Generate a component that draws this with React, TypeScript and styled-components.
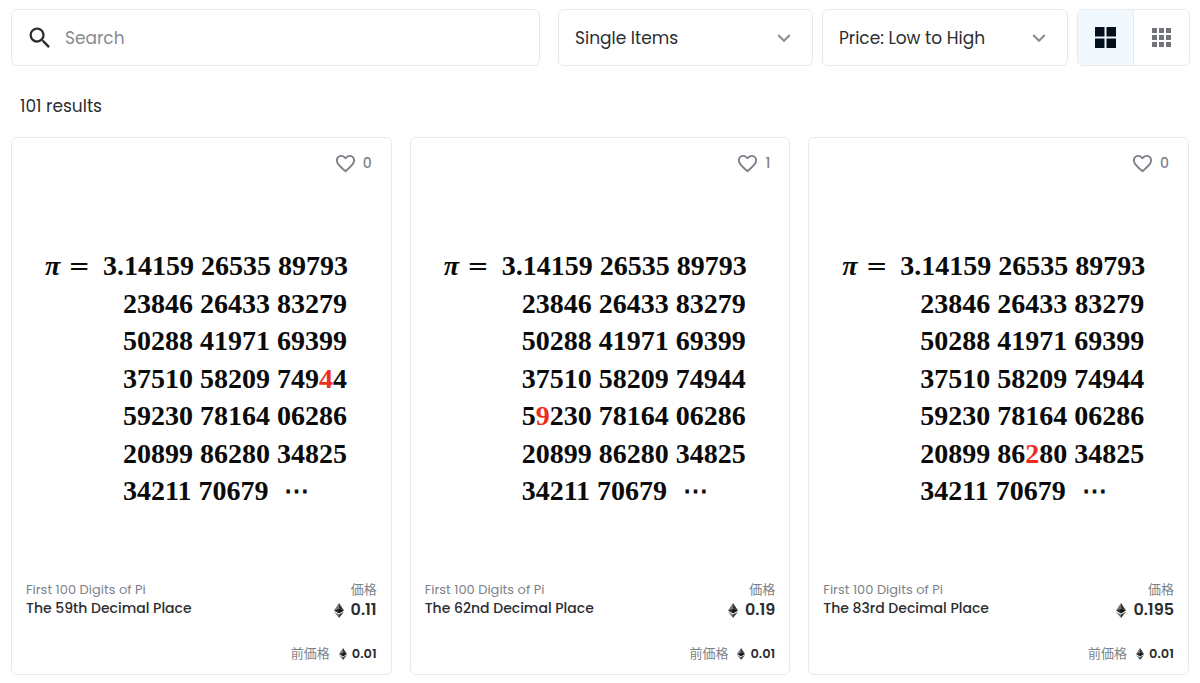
import React from "react";
import styled, { createGlobalStyle } from "styled-components";
import { MdSearch, MdKeyboardArrowDown, MdFavoriteBorder } from "react-icons/md";

const GlobalStyle = createGlobalStyle`
  *, *::before, *::after { box-sizing: border-box; }
  body, button, input, select {
    font-family: Poppins, Inter, "Noto Sans CJK JP", sans-serif;
  }
  body {
    margin: 0;
    background: #fff;
    color: #2b2d31;
  }
  button, input, select { color: inherit; }
`;

const line = "#e8e9eb";
const muted = "#7d828a";

const Page = styled.main`
  padding: 9px 10px 9px 11px;
`;

const Toolbar = styled.form`
  display: flex;
  gap: 9px;
  height: 57px;
`;

const SearchBox = styled.label`
  display: flex;
  flex: 1;
  align-items: center;
  gap: 11px;
  min-width: 0;
  margin-right: 9px;
  padding: 0 14px;
  border: 1px solid ${line};
  border-radius: 6px;
`;

const SearchInput = styled.input`
  flex: 1;
  min-width: 0;
  padding: 0;
  border: 0;
  outline: 0;
  background: transparent;
  font-size: 17px;
  &::placeholder { color: #878b91; opacity: 1; }
`;

const SelectBox = styled.div<{ $width: number }>`
  display: grid;
  align-items: center;
  width: ${(p) => p.$width}px;
  border: 1px solid ${line};
  border-radius: 6px;

  & > * { grid-area: 1 / 1; }
  & > svg {
    justify-self: end;
    margin-right: 15px;
    color: #8a8d92;
    pointer-events: none;
  }
`;

const Select = styled.select`
  width: 100%;
  height: 100%;
  padding: 0 44px 0 16px;
  border: 0;
  border-radius: 6px;
  appearance: none;
  background: transparent;
  font-size: 17px;
`;

const Toggle = styled.div`
  display: flex;
  width: 113px;
  overflow: hidden;
  border: 1px solid ${line};
  border-radius: 6px;
`;

const ToggleButton = styled.button<{ $active?: boolean }>`
  display: grid;
  flex: 1;
  place-items: center;
  padding: 0;
  border: 0;
  background: ${(p) => (p.$active ? "#f2f9fe" : "#fff")};
  color: ${(p) => (p.$active ? "#04111d" : "#707478")};
  & + & { border-left: 1px solid ${line}; }
`;

const Results = styled.p`
  margin: 29px 9px 19px;
  font-size: 17px;
  line-height: 23px;
`;

const CardGrid = styled.div`
  display: grid;
  grid-template-columns: repeat(3, 1fr);
  gap: 18px;
  margin-right: 1px;
`;

const Card = styled.article`
  display: flex;
  flex-direction: column;
  padding: 14px 14px 11px;
  border: 1px solid ${line};
  border-radius: 6px;
`;

const Like = styled.button`
  display: flex;
  align-items: center;
  align-self: flex-end;
  gap: 6px;
  height: 23px;
  margin-right: 5px;
  padding: 0;
  border: 0;
  background: none;
  color: ${muted};
  font-size: 14px;
  font-weight: 500;
`;

const Artwork = styled.div`
  display: flex;
  flex-direction: column;
  justify-content: space-between;
  height: 257px;
  margin: 75px 0 73px;
  padding-left: 19px;
  color: #0b0b0b;
  font-family: "Liberation Serif", serif;
  font-size: 28px;
  font-weight: 700;
  line-height: 32px;
  white-space: nowrap;
`;

const DigitRow = styled.div<{ $first?: boolean }>`
  display: flex;
  padding-left: ${(p) => (p.$first ? 0 : 78)}px;
`;

const Lead = styled.span`
  display: flex;
  gap: 8px;
  width: 58px;
`;

const Equals = styled.span`
  font-family: "DejaVu Serif", serif;
  font-size: 26px;
  font-weight: 400;
`;

const Dots = styled.span`
  margin-left: 16px;
  font-size: 25px;
`;

const Red = styled.span`
  color: #ee2d1c;
`;

const Details = styled.div`
  display: flex;
  justify-content: space-between;
`;

const Column = styled.div<{ $end?: boolean }>`
  display: flex;
  flex-direction: column;
  align-items: ${(p) => (p.$end ? "flex-end" : "flex-start")};
`;

const Caption = styled.span`
  color: ${muted};
  font-size: 13px;
  line-height: 19px;
`;

const Title = styled.h2`
  margin: 0;
  font-size: 14px;
  font-weight: 500;
  line-height: 19px;
`;

const Price = styled.span<{ $small?: boolean }>`
  display: flex;
  align-items: center;
  gap: ${(p) => (p.$small ? 5 : 7)}px;
  font-size: ${(p) => (p.$small ? 13 : 16)}px;
  font-weight: 600;
  line-height: ${(p) => (p.$small ? 19 : 22)}px;
`;

const LastPrice = styled.div`
  display: flex;
  align-items: center;
  justify-content: flex-end;
  gap: 9px;
  margin-top: 23px;
`;

const Eth = ({ size }: { size: number }) => (
  <svg width={(size * 2) / 3} height={size} viewBox="0 0 10 15" aria-hidden="true">
    <path d="M5 0 0 7.6 5 5.4z" fill="#777" />
    <path d="M5 0v5.4l5 2.2z" fill="#333" />
    <path d="M0 7.6 5 5.4v5.1z" fill="#292929" />
    <path d="M10 7.6 5 5.4v5.1z" fill="#111" />
    <path d="M0 8.7 5 15v-3.4z" fill="#777" />
    <path d="M10 8.7 5 15v-3.4z" fill="#333" />
  </svg>
);

const Squares = ({ count, size, gap }: { count: number; size: number; gap: number }) => {
  const total = count * size + (count - 1) * gap;
  return (
    <svg width={total} height={total} fill="currentColor" aria-hidden="true">
      {Array.from({ length: count * count }, (_, i) => (
        <rect
          key={i}
          x={(i % count) * (size + gap)}
          y={Math.floor(i / count) * (size + gap)}
          width={size}
          height={size}
        />
      ))}
    </svg>
  );
};

const digits = [
  "3.14159 26535 89793",
  "23846 26433 83279",
  "50288 41971 69399",
  "37510 58209 74944",
  "59230 78164 06286",
  "20899 86280 34825",
  "34211 70679",
];

const items = [
  { title: "The 59th Decimal Place", likes: 0, price: "0.11", row: 3, at: 15 },
  { title: "The 62nd Decimal Place", likes: 1, price: "0.19", row: 4, at: 1 },
  { title: "The 83rd Decimal Place", likes: 0, price: "0.195", row: 5, at: 8 },
];

const PiDigits = ({ row, at }: { row: number; at: number }) => (
  <Artwork>
    {digits.map((text, i) => (
      <DigitRow key={text} $first={i === 0}>
        {i === 0 && (
          <Lead>
            <i>π</i>
            <Equals>=</Equals>
          </Lead>
        )}
        <span>
          {i === row ? (
            <>
              {text.slice(0, at)}
              <Red>{text[at]}</Red>
              {text.slice(at + 1)}
            </>
          ) : (
            text
          )}
        </span>
        {i === digits.length - 1 && <Dots>⋯</Dots>}
      </DigitRow>
    ))}
  </Artwork>
);

export default function App() {
  return (
    <Page>
      <GlobalStyle />
      <Toolbar onSubmit={(e) => e.preventDefault()}>
        <SearchBox>
          <MdSearch size={28} aria-hidden="true" />
          <SearchInput type="text" placeholder="Search" aria-label="Search" />
        </SearchBox>
        <SelectBox $width={255}>
          <Select aria-label="Item type">
            <option>Single Items</option>
          </Select>
          <MdKeyboardArrowDown size={26} aria-hidden="true" />
        </SelectBox>
        <SelectBox $width={246}>
          <Select aria-label="Sort by">
            <option>Price: Low to High</option>
          </Select>
          <MdKeyboardArrowDown size={26} aria-hidden="true" />
        </SelectBox>
        <Toggle>
          <ToggleButton type="button" $active aria-pressed="true" aria-label="Large grid">
            <Squares count={2} size={9.5} gap={2} />
          </ToggleButton>
          <ToggleButton type="button" aria-pressed="false" aria-label="Small grid">
            <Squares count={3} size={5} gap={2} />
          </ToggleButton>
        </Toggle>
      </Toolbar>
      <Results>101 results</Results>
      <CardGrid>
        {items.map((item) => (
          <Card key={item.title}>
            <Like type="button" aria-label={`Like, ${item.likes}`}>
              <MdFavoriteBorder size={23} aria-hidden="true" />
              {item.likes}
            </Like>
            <PiDigits row={item.row} at={item.at} />
            <Details>
              <Column>
                <Caption>First 100 Digits of Pi</Caption>
                <Title>{item.title}</Title>
              </Column>
              <Column $end>
                <Caption>価格</Caption>
                <Price>
                  <Eth size={15} />
                  {item.price}
                </Price>
              </Column>
            </Details>
            <LastPrice>
              <Caption>前価格</Caption>
              <Price $small>
                <Eth size={12} />
                0.01
              </Price>
            </LastPrice>
          </Card>
        ))}
      </CardGrid>
    </Page>
  );
}
